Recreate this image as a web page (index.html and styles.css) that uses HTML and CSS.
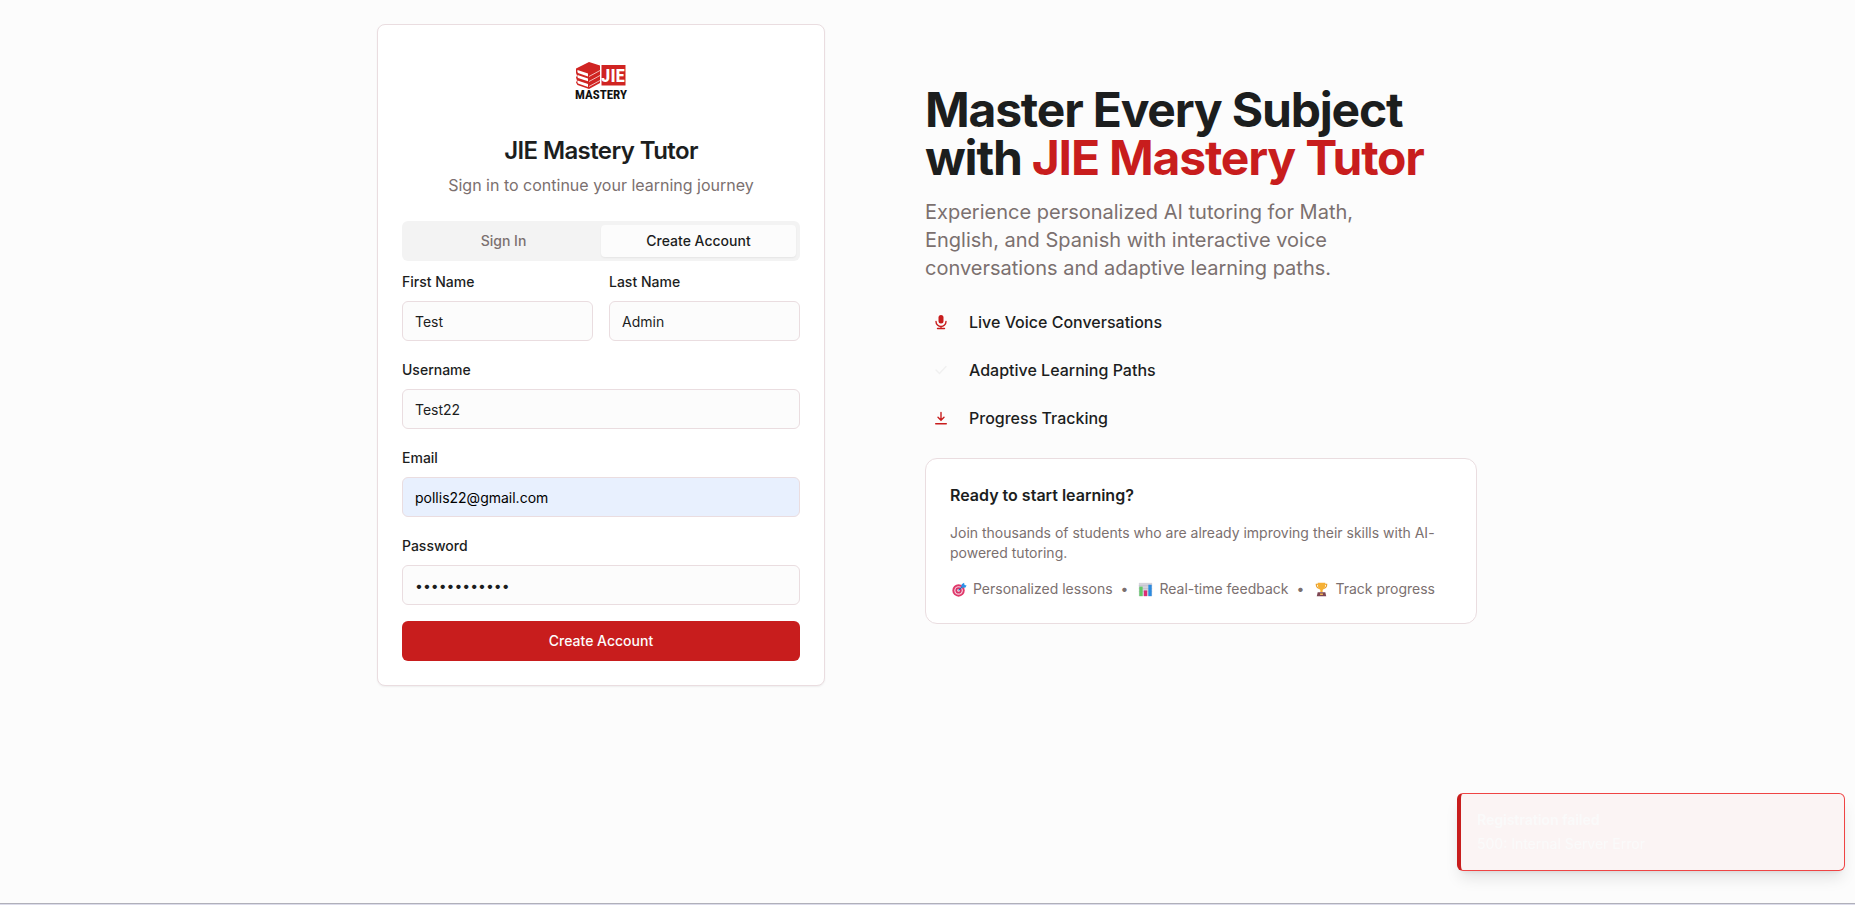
FILE: index.html
```html
<!DOCTYPE html>
<html lang="en">
<head>
<meta charset="utf-8">
<meta name="viewport" content="width=device-width, initial-scale=1">
<title>JIE Mastery Tutor</title>
<link rel="stylesheet" href="styles.css">
</head>
<body>
<main class="page">
  <section class="card auth">
    <header class="auth-header">
      <svg class="logo" viewBox="0 0 64 64" role="img" aria-label="JIE Mastery">
        <g transform="translate(7 13)">
          <path fill="#d02422" d="M0 6.500 13 0 24 3.500V21L13 27 1.500 23 0 20.500 1 18.500 0 15.500 1 13.500 0 11Z"/>
          <g fill="#fff">
            <path d="M1.500 8 12 11.500V14.500L2 11Q1 10 1.500 8Z"/>
            <path d="M1.500 13 12 16.500V19.300L2 16Q1 15 1.500 13Z"/>
            <path d="M1.500 18.500 12 22V25L2 21.500Q1 20.500 1.500 18.500Z"/>
          </g>
          <path fill="none" stroke="#fff" stroke-width=".7" d="M13 14.500 24 8.500M13 19.500 24 13.500M13 24.500 24 18.500"/>
          <path fill="#d02422" d="M25.500 3H49.500V23.500H25.500Z"/>
        </g>
        <text class="logo-jie" x="44" y="33" text-anchor="middle">JIE</text>
        <text class="logo-name" x="32" y="50" text-anchor="middle">MASTERY</text>
      </svg>
      <h1 class="auth-title">JIE Mastery Tutor</h1>
      <p class="auth-subtitle">Sign in to continue your learning journey</p>
    </header>
    <div class="tabs" role="tablist">
      <button class="tab" type="button" role="tab" aria-selected="false">Sign In</button>
      <button class="tab tab-active" type="button" role="tab" aria-selected="true">Create Account</button>
    </div>
    <form class="form">
      <div class="form-row">
        <div class="field">
          <label for="first-name">First Name</label>
          <input id="first-name" type="text" value="Test">
        </div>
        <div class="field">
          <label for="last-name">Last Name</label>
          <input id="last-name" type="text" value="Admin">
        </div>
      </div>
      <div class="field">
        <label for="username">Username</label>
        <input id="username" type="text" value="Test22">
      </div>
      <div class="field">
        <label for="email">Email</label>
        <input id="email" class="autofilled" type="email" value="pollis22@gmail.com">
      </div>
      <div class="field">
        <label for="password">Password</label>
        <input id="password" type="password" value="abcdefghijkl">
      </div>
      <button class="submit" type="submit">Create Account</button>
    </form>
  </section>

  <section class="hero">
    <h2 class="hero-title">Master Every Subject<br>with <span class="accent">JIE Mastery Tutor</span></h2>
    <p class="hero-text">Experience personalized AI tutoring for Math, English, and Spanish with interactive voice conversations and adaptive learning paths.</p>
    <ul class="features">
      <li>
        <span class="feature-icon"><svg viewBox="0 0 16 16" aria-hidden="true"><rect x="5.500" y="1" width="5" height="8.500" rx="2.500" fill="currentColor"/><path d="M3 7.500a5 5 0 0 0 10 0M8 12.500v2M4.500 14.500h7" fill="none" stroke="currentColor" stroke-width="1.400" stroke-linecap="round"/></svg></span>
        Live Voice Conversations
      </li>
      <li>
        <span class="feature-icon faint"><svg viewBox="0 0 16 16" aria-hidden="true"><path d="m3 8 3.500 3.500L13 4.500" fill="none" stroke="currentColor" stroke-width="1.400" stroke-linecap="round"/></svg></span>
        Adaptive Learning Paths
      </li>
      <li>
        <span class="feature-icon"><svg viewBox="0 0 16 16" aria-hidden="true"><path d="M8 2.500v7.500M5 7.200l3 3 3-3M2.700 13.800h10.600" fill="none" stroke="currentColor" stroke-width="1.400" stroke-linecap="round"/></svg></span>
        Progress Tracking
      </li>
    </ul>
    <div class="card promo">
      <h3 class="promo-title">Ready to start learning?</h3>
      <p class="promo-text">Join thousands of students who are already improving their skills with AI-powered tutoring.</p>
      <div class="perks">
        <span class="perk"><svg viewBox="0 0 20 20" aria-hidden="true"><circle cx="9" cy="11" r="6.500" fill="#e0386a"/><circle cx="9" cy="11" r="4.500" fill="#f6d3df"/><circle cx="9" cy="11" r="3.300" fill="#d83268"/><circle cx="9" cy="11" r="1.400" fill="#fbe3ea"/><path d="m9 11 5-5" stroke="#1769b8" stroke-width="1.200"/><path d="m12 8 .3-3.500L14.800 3l.5 2.200 2.200.5L16 8.200Z" fill="#2c92e8"/></svg>Personalized lessons</span>
        <span>•</span>
        <span class="perk"><svg viewBox="0 0 20 20" aria-hidden="true"><path fill="#d5d3dc" d="M3 3h14v14H3z"/><path stroke="#b9b6c4" stroke-width=".6" d="M3 6h14M3 9h14M3 12h14"/><path fill="#62c968" d="M3.500 7H7v10H3.500z"/><path fill="#dc2c74" d="M8.300 11h3.400v6H8.300z"/><path fill="#2b8be0" d="M13 5h3.500v12H13z"/></svg>Real-time feedback</span>
        <span>•</span>
        <span class="perk"><svg viewBox="0 0 20 20" aria-hidden="true"><path fill="none" stroke="#e8a02c" stroke-width="1.200" d="M6.500 4.500h-2q0 4 3.500 4.500M13.500 4.500h2q0 4-3.500 4.500"/><path fill="#f6b034" d="M6 3h8q.300 6-2.800 7.500V13H8.800v-2.500Q5.700 9 6 3Z"/><path fill="#7d4653" d="M6 13h8l1 4H5z"/><path fill="#f0b455" d="M8.500 14.200h3v1.600h-3z"/></svg>Track progress</span>
      </div>
    </div>
  </section>
</main>
<div class="toast" role="alert">
  <strong class="toast-title">Registration failed</strong>
  <span>500: Internal Server Error</span>
</div>
<div class="bottom-edge"></div>
</body>
</html>
```
FILE: styles.css
```css
* { box-sizing: border-box; }

body {
  margin: 0;
  min-height: 100vh;
  background: #fcfcfc;
  color: #1c1e1e;
  font: 14px/20px Inter, "Liberation Sans", sans-serif;
}

h1, h2, h3, p, ul { margin: 0; padding: 0; }
button, input { font: inherit; color: inherit; }

.page {
  display: flex;
  align-items: center;
  justify-content: center;
  gap: 100px;
  padding: 24px 17px 24px 16px;
}

.card {
  padding: 24px;
  background: #fff;
  border: 1px solid #eadde0;
}

.auth {
  flex: 0 1 448px;
  border-radius: 8px;
  box-shadow: 0 1px 2px rgba(0, 0, 0, .06);
}

.auth-header {
  display: flex;
  flex-direction: column;
  align-items: center;
  padding-bottom: 24px;
  text-align: center;
}

.logo { width: 64px; height: 64px; }
.logo-jie { font: bold 19px "Roboto Condensed", Roboto, sans-serif; fill: #fff; }
.logo-name { font: bold 13px "Roboto Condensed", Roboto, sans-serif; fill: #111; }

.auth-title {
  margin-top: 26px;
  font-size: 24px;
  line-height: 24px;
  font-weight: 600;
  letter-spacing: -0.025em;
}

.auth-subtitle {
  margin-top: 10px;
  font-size: 16px;
  line-height: 24px;
  color: #7b706f;
}

.tabs {
  display: grid;
  grid-template-columns: 1fr 1fr;
  height: 40px;
  padding: 4px;
  border-radius: 6px;
  background: #f3f3f3;
}

.tab {
  border: 0;
  border-radius: 4px;
  background: none;
  color: #7b706f;
  font-weight: 500;
}

.tab-active {
  background: #fcfcfc;
  color: #1c1e1e;
  box-shadow: 0 1px 2px rgba(0, 0, 0, .06);
}

.form {
  display: grid;
  gap: 16px;
  margin-top: 8px;
}

.form-row {
  display: grid;
  grid-template-columns: 1fr 1fr;
  gap: 16px;
}

.field {
  display: grid;
  gap: 6px;
}

.field label {
  font-weight: 500;
  line-height: 26px;
}

.field input {
  width: 100%;
  height: 40px;
  padding: 8px 12px;
  border: 1px solid #eadde0;
  border-radius: 6px;
  background: #fcfcfc;
}

.field .autofilled {
  background: #e8f0fe;
  color: #000;
}

.submit {
  height: 40px;
  border: 0;
  border-radius: 6px;
  background: #c81d1d;
  color: #fcfcfc;
  font-weight: 500;
}

.hero { flex: 0 1 552px; }

.hero-title {
  font-size: 48px;
  line-height: 48px;
  font-weight: 700;
  letter-spacing: -0.025em;
}

.accent { color: #c81d1d; }

.hero-text {
  max-width: 448px;
  margin-top: 16px;
  font-size: 20px;
  line-height: 28px;
  color: #7b706f;
}

.features {
  display: grid;
  gap: 16px;
  margin: 24px 0;
  list-style: none;
}

.features li {
  display: flex;
  align-items: center;
  gap: 12px;
  font-size: 16px;
  font-weight: 500;
}

.feature-icon {
  display: grid;
  place-items: center;
  width: 32px;
  height: 32px;
  color: #c81d1d;
}

.feature-icon svg { width: 16px; height: 16px; }
.faint { color: #f0f0f0; }

.promo { border-radius: 12px; }

.promo-title {
  font-size: 16px;
  line-height: 24px;
  font-weight: 600;
}

.promo-text {
  margin: 16px 0;
  color: #7b706f;
}

.perks {
  display: flex;
  flex-wrap: wrap;
  gap: 8px;
  color: #7b706f;
}

.perk {
  display: flex;
  align-items: center;
  gap: 4px;
}

.perk svg { width: 19px; height: 19px; }

.toast {
  position: fixed;
  right: 10px;
  bottom: 34px;
  display: grid;
  gap: 4px;
  width: 388px;
  padding: 16px;
  border: 1px solid #ef4444;
  border-left: 4px solid #c81d1d;
  border-radius: 6px;
  background: #fbf4f4;
  color: #fafafa;
  box-shadow: 0 10px 15px -3px rgba(0, 0, 0, .1), 0 4px 6px -4px rgba(0, 0, 0, .1);
}

.toast-title { font-weight: 600; }

.bottom-edge {
  position: fixed;
  right: 0;
  bottom: 0;
  left: 0;
  height: 2px;
  background: #dcdcea;
  border-top: 1px solid #b0b0ba;
}
```
